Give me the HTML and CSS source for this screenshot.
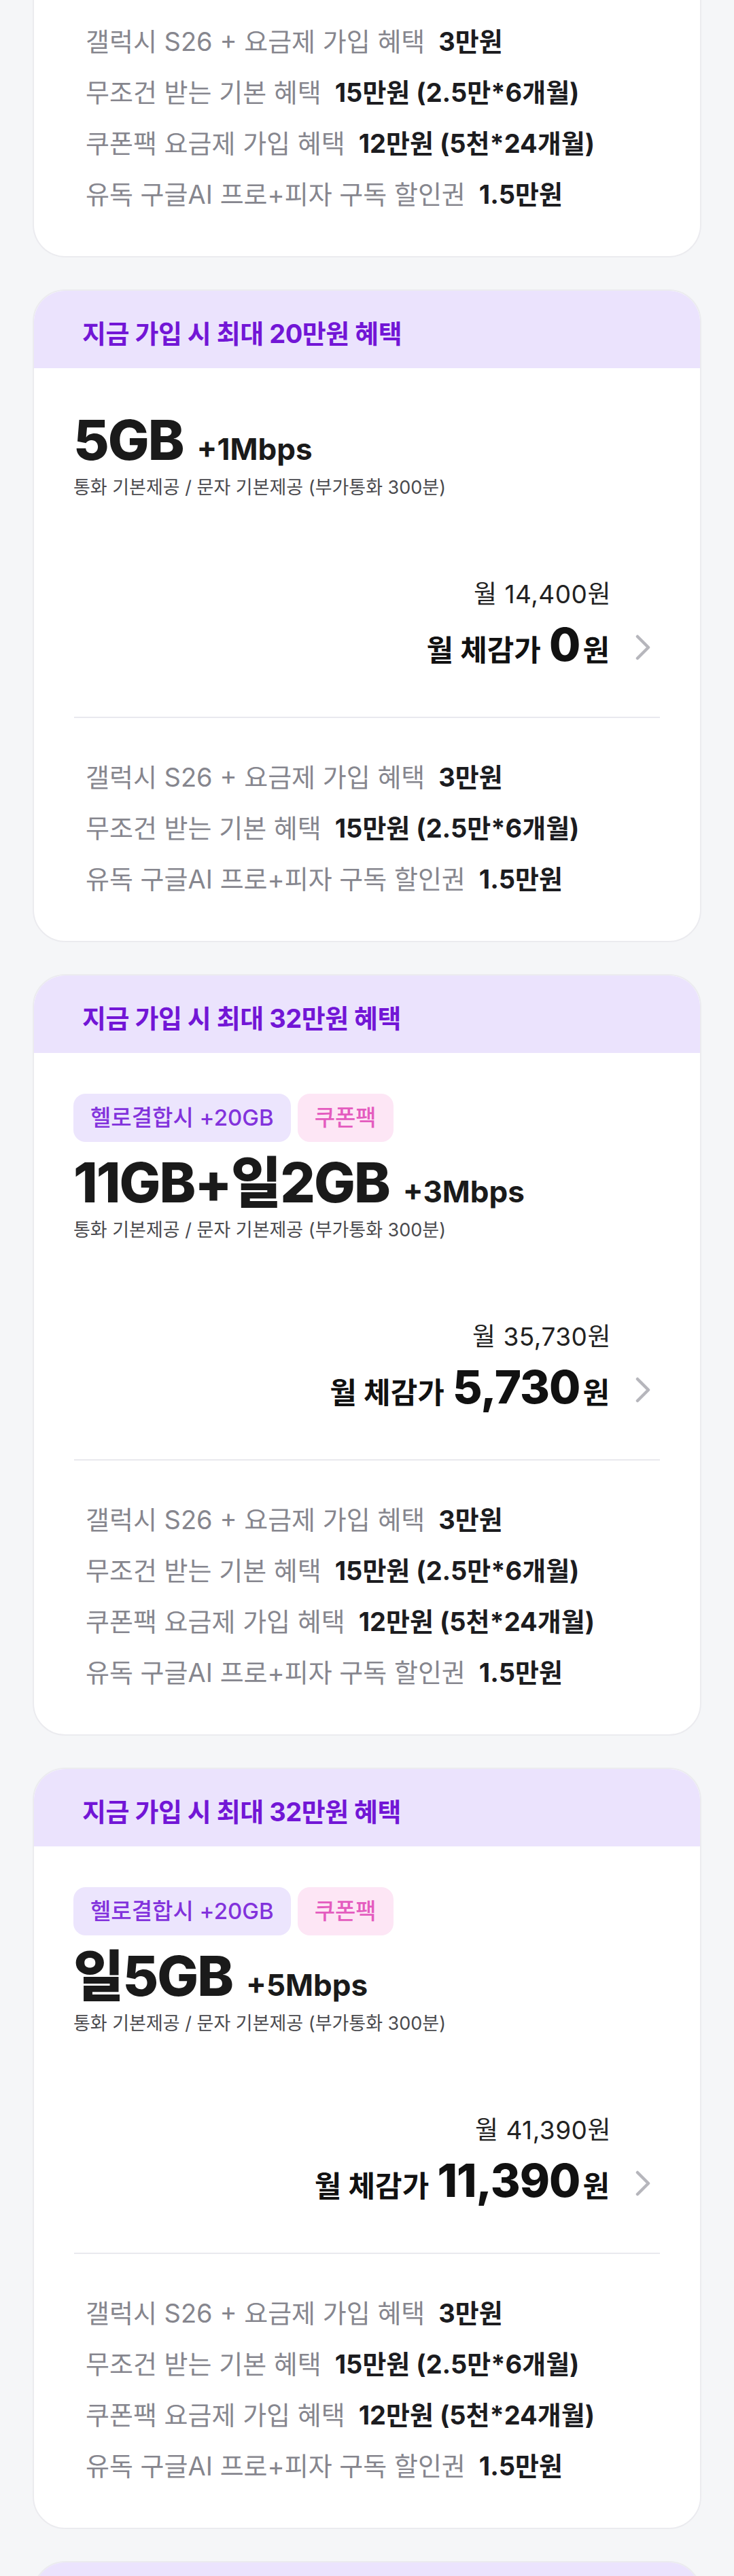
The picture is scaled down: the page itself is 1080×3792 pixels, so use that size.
FILE: index.html
```html
<!DOCTYPE html>
<html lang="ko">
<head>
    <meta charset="UTF-8">
    <meta name="viewport" content="width=device-width, initial-scale=1.0">
    <link rel="stylesheet" href="styles.css">
    <title>요금제 목록</title>
</head>
<body>

    <div class="plans">

        <section class="plan plan-cut">
            <ul class="benefits">
                <li>갤럭시 S26 + 요금제 가입 혜택<strong>3만원</strong></li>
                <li>무조건 받는 기본 혜택<strong>15만원 (2.5만*6개월)</strong></li>
                <li>쿠폰팩 요금제 가입 혜택<strong>12만원 (5천*24개월)</strong></li>
                <li>유독 구글AI 프로+피자 구독 할인권<strong>1.5만원</strong></li>
            </ul>
        </section>

        <section class="plan">
            <div class="plan-head">지금 가입 시 최대 20만원 혜택</div>
            <div class="plan-body">
                <h2 class="plan-title">
                    <span class="plan-data">5GB</span>
                    <span class="plan-speed">+1Mbps</span>
                </h2>
                <p class="plan-desc">통화 기본제공 / 문자 기본제공 (부가통화 300분)</p>
                <div class="plan-price">
                    <div class="price-list">월 14,400원</div>
                    <a class="price-real" href="#">
                        <span>월 체감가 <strong>0</strong>원</span>
                        <svg viewBox="0 0 22 38">
                            <path d="M3 3 L19 19 L3 35" />
                        </svg>
                    </a>
                </div>
            </div>
            <ul class="benefits">
                <li>갤럭시 S26 + 요금제 가입 혜택<strong>3만원</strong></li>
                <li>무조건 받는 기본 혜택<strong>15만원 (2.5만*6개월)</strong></li>
                <li>유독 구글AI 프로+피자 구독 할인권<strong>1.5만원</strong></li>
            </ul>
        </section>

        <section class="plan">
            <div class="plan-head">지금 가입 시 최대 32만원 혜택</div>
            <div class="plan-body">
                <div class="plan-tags">
                    <span class="tag tag-hello">헬로결합시 +20GB</span>
                    <span class="tag tag-coupon">쿠폰팩</span>
                </div>
                <h2 class="plan-title">
                    <span class="plan-data">11GB+일2GB</span>
                    <span class="plan-speed">+3Mbps</span>
                </h2>
                <p class="plan-desc">통화 기본제공 / 문자 기본제공 (부가통화 300분)</p>
                <div class="plan-price">
                    <div class="price-list">월 35,730원</div>
                    <a class="price-real" href="#">
                        <span>월 체감가 <strong>5,730</strong>원</span>
                        <svg viewBox="0 0 22 38">
                            <path d="M3 3 L19 19 L3 35" />
                        </svg>
                    </a>
                </div>
            </div>
            <ul class="benefits">
                <li>갤럭시 S26 + 요금제 가입 혜택<strong>3만원</strong></li>
                <li>무조건 받는 기본 혜택<strong>15만원 (2.5만*6개월)</strong></li>
                <li>쿠폰팩 요금제 가입 혜택<strong>12만원 (5천*24개월)</strong></li>
                <li>유독 구글AI 프로+피자 구독 할인권<strong>1.5만원</strong></li>
            </ul>
        </section>

        <section class="plan">
            <div class="plan-head">지금 가입 시 최대 32만원 혜택</div>
            <div class="plan-body">
                <div class="plan-tags">
                    <span class="tag tag-hello">헬로결합시 +20GB</span>
                    <span class="tag tag-coupon">쿠폰팩</span>
                </div>
                <h2 class="plan-title">
                    <span class="plan-data">일5GB</span>
                    <span class="plan-speed">+5Mbps</span>
                </h2>
                <p class="plan-desc">통화 기본제공 / 문자 기본제공 (부가통화 300분)</p>
                <div class="plan-price">
                    <div class="price-list">월 41,390원</div>
                    <a class="price-real" href="#">
                        <span>월 체감가 <strong>11,390</strong>원</span>
                        <svg viewBox="0 0 22 38">
                            <path d="M3 3 L19 19 L3 35" />
                        </svg>
                    </a>
                </div>
            </div>
            <ul class="benefits">
                <li>갤럭시 S26 + 요금제 가입 혜택<strong>3만원</strong></li>
                <li>무조건 받는 기본 혜택<strong>15만원 (2.5만*6개월)</strong></li>
                <li>쿠폰팩 요금제 가입 혜택<strong>12만원 (5천*24개월)</strong></li>
                <li>유독 구글AI 프로+피자 구독 할인권<strong>1.5만원</strong></li>
            </ul>
        </section>

        <section class="plan plan-next">
            <div class="plan-head"></div>
        </section>

    </div>

</body>
</html>
```

FILE: styles.css
```css
* {
    margin: 0;
    padding: 0;
    box-sizing: border-box;
}

body {
    background-color: #f5f6f8;
    font-family: Inter, "Noto Sans CJK KR", sans-serif;
    color: #1b1b1f;
}

.plans {
    display: flex;
    flex-direction: column;
    gap: 47px;
    padding: 0 48px 40px;
}

.plan {
    background-color: white;
    border: 2px solid #ebebef;
    border-radius: 48px;
    overflow: hidden;
}
.plan-cut {
    border-top: none;
    border-radius: 0 0 48px 48px;
}

.plan-head {
    background-color: #ebe3fd;
    color: #7216d6;
    font-size: 38px;
    font-weight: 700;
    letter-spacing: -0.5px;
    line-height: 50px;
    padding: 38px 71px 26px;
}
.plan-next .plan-head {
    height: 116px;
}

.plan-body {
    padding: 60px 58px 67px;
}

.plan-tags {
    display: flex;
    gap: 10px;
    margin-bottom: 14px;
}
.tag {
    height: 71px;
    line-height: 71px;
    padding: 0 25px;
    border-radius: 18px;
    font-size: 33px;
    font-weight: 500;
}
.tag-hello {
    background-color: #ece5fd;
    color: #8232dc;
}
.tag-coupon {
    background-color: #fde6f5;
    color: #e45cbf;
}

.plan-title {
    display: flex;
    align-items: baseline;
    height: 92px;
    line-height: 92px;
    color: #1a1a1a;
}
.plan-data {
    font-size: 81px;
    font-weight: 800;
    letter-spacing: -2px;
}
.plan-speed {
    font-size: 44px;
    font-weight: 700;
    margin-left: 20px;
}

.plan-desc {
    margin-top: 4px;
    font-size: 27px;
    line-height: 40px;
    color: #4a4a4e;
}

.plan-price {
    display: flex;
    flex-direction: column;
    align-items: flex-end;
    margin-top: 115px;
}
.price-list {
    margin-right: 73px;
    font-size: 37px;
    letter-spacing: 0.5px;
    line-height: 44px;
    color: #222;
}
.price-real {
    display: flex;
    align-items: center;
    height: 70px;
    margin-top: 21px;
    padding-right: 15px;
    color: #111;
    text-decoration: none;
    font-size: 43px;
    font-weight: 700;
    line-height: 70px;
}
.price-real strong {
    font-size: 67px;
    font-weight: 800;
    letter-spacing: -1px;
    margin: 0 4px 0 2px;
}
.price-real svg {
    width: 22px;
    height: 38px;
    margin-left: 38px;
    fill: none;
    stroke: #b6b6bc;
    stroke-width: 4.5;
    stroke-linecap: round;
    stroke-linejoin: round;
}

.benefits {
    list-style: none;
    margin: 0 59px;
    border-top: 2px solid #e9e9ee;
    padding: 50px 0 53px 17px;
}
.plan-cut .benefits {
    border-top: none;
    padding-top: 24px;
}
.benefits li {
    font-size: 38px;
    line-height: 75px;
    color: #86868e;
    white-space: nowrap;
}
.benefits strong {
    margin-left: 20px;
    color: #1c1c1f;
    font-weight: 700;
}
```
